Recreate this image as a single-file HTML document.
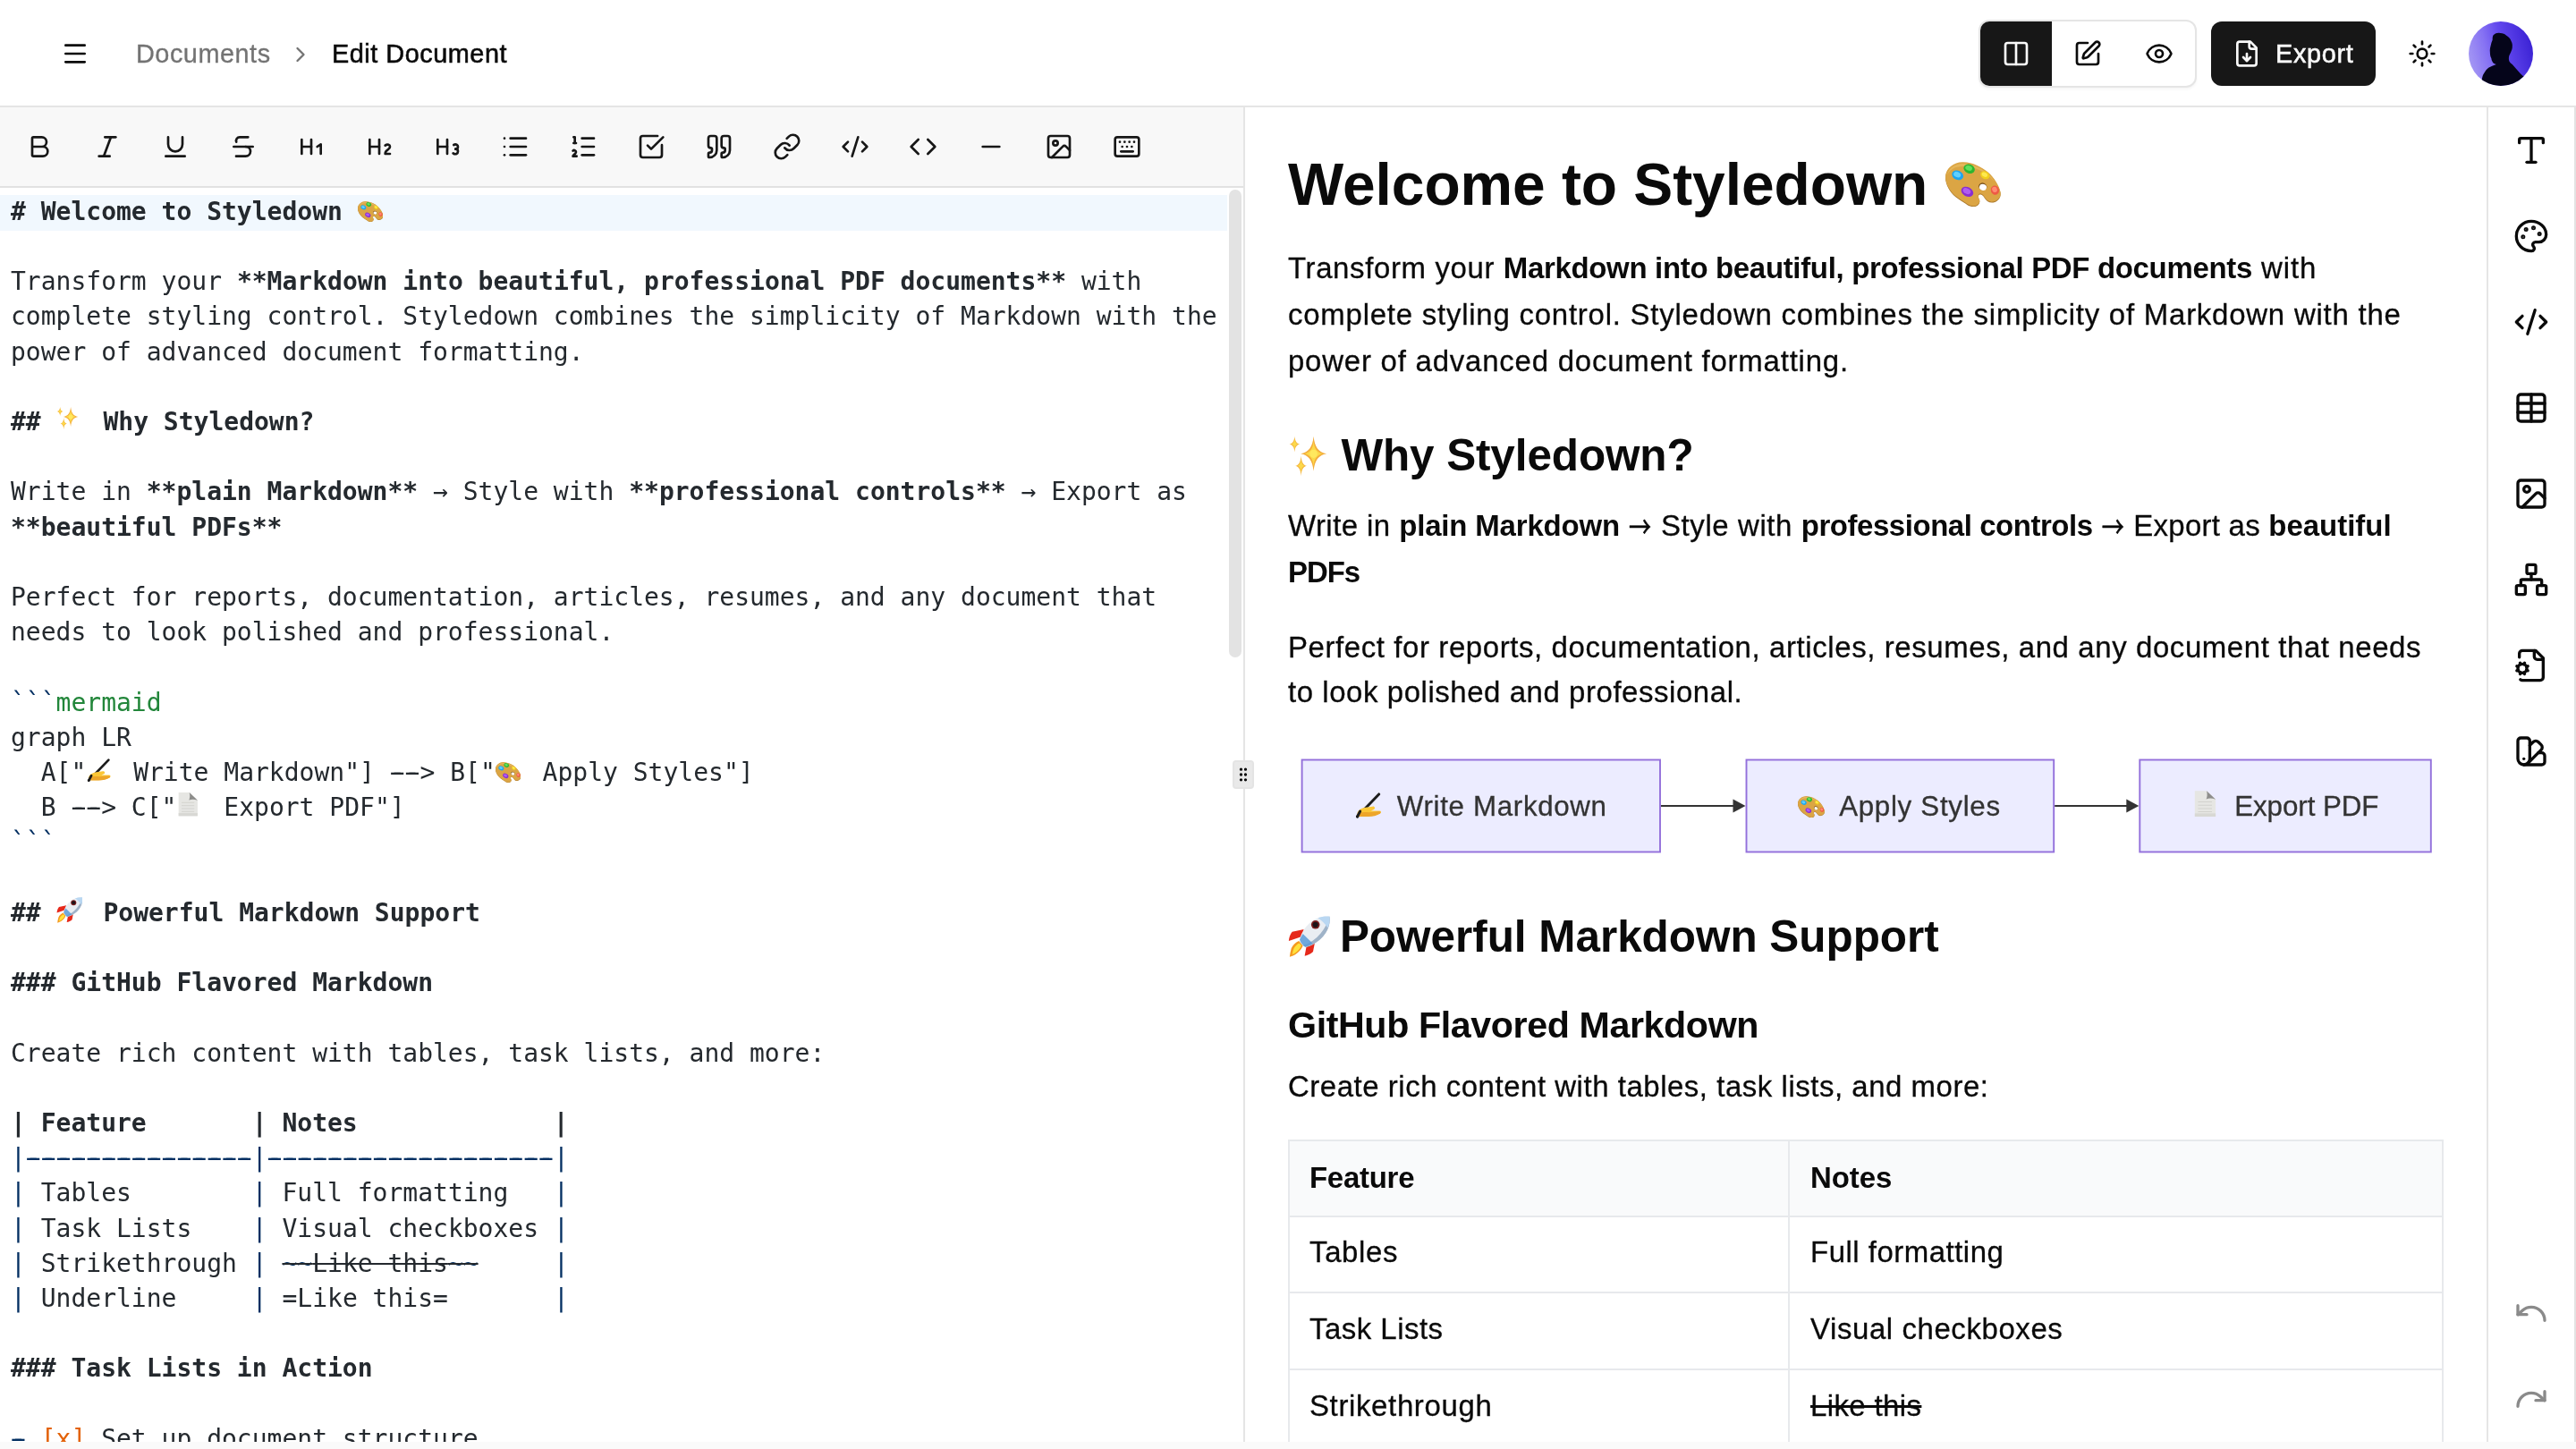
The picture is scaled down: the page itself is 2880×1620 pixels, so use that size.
<!DOCTYPE html><html lang="en"><head><meta charset="utf-8"><title>Styledown – Edit Document</title><style>
*{box-sizing:border-box;margin:0;padding:0}
html,body{width:2880px;height:1620px;overflow:hidden}
@media (max-width:2000px){html{zoom:.5}}
body{background:#fafafa;font-family:"Liberation Sans", sans-serif;color:#0a0a0a;position:relative}
#card{position:absolute;left:0;top:0;width:2880px;height:1612px;background:#fff;overflow:hidden}
#rb{position:absolute;left:2878px;top:120px;width:2px;height:1492px;background:#e3e3e3}
.ic{position:absolute;display:block}
.tl{position:absolute;white-space:pre;will-change:transform}
.em{display:inline-block;position:relative;height:1px;vertical-align:baseline}
.em svg{position:absolute;bottom:auto}
#hdr{position:absolute;left:0;top:0;width:2880px;height:120px;border-bottom:2px solid #e5e5e5;background:#fff}
#grp{position:absolute;left:2212px;top:22px;width:244px;height:76px;border:2px solid #e5e5e5;border-radius:12px;box-shadow:0 2px 3px rgba(0,0,0,.04);overflow:hidden;background:#fff}
#grp .on{position:absolute;left:0;top:0;width:80px;height:72px;background:#171717}
#exp{position:absolute;left:2472px;top:24px;width:184px;height:72px;border-radius:12px;background:#171717}
#ava{position:absolute;left:2760px;top:24px}
#tb{position:absolute;left:0;top:120px;width:1390px;height:90px;background:#f8f8f8;border-bottom:2px solid #e2e2e2}
#tb .ic{margin-top:-120px}
#ed{position:absolute;left:0;top:210px;width:1390px;height:1402px;overflow:hidden;font-family:"DejaVu Sans Mono", "Liberation Mono", monospace;font-size:28px;line-height:39.2px;color:#24292e;background:#fff}
#ed .el{position:absolute;left:12px;white-space:pre;height:39.2px;margin-top:-210px;will-change:transform}
#ed b{font-weight:700}
#ed .em{height:1px}
#act{position:absolute;left:0;width:1372px;height:39.6px;background:#f1f8fe;margin-top:-210px}
.st{text-decoration:line-through;text-decoration-thickness:2px}
.dw{text-shadow:3.5px 0 0 currentColor,-3.5px 0 0 currentColor}
.md{-webkit-text-stroke:.55px currentColor}
#sbt{position:absolute;left:1374px;top:2px;width:14px;height:523px;border-radius:7px;background:#e3e3e3}
#div{position:absolute;left:1390px;top:120px;width:2px;height:1492px;background:#e5e5e5}
#hdl{position:absolute;left:1378px;top:850px;width:24px;height:32px;border-radius:4px;background:#e9e9e9;border:2px solid #e4e4e4}
#pv{position:absolute;left:0;top:0;width:2780px;height:1612px;overflow:hidden;pointer-events:none}
.arr{display:inline-block;width:27.3px;text-align:center;font-family:"Noto Sans CJK SC","Liberation Sans", sans-serif;font-size:25px;line-height:1;letter-spacing:0;-webkit-text-stroke:.45px currentColor;transform:scaleY(1.3);position:relative;top:-1.2px}
#mm{position:absolute}
#tbl{position:absolute;left:1440px;top:1274px;width:1292px;height:400px;border:2px solid #e7e9ec;border-bottom:none}
#tbl .th{position:absolute;left:0;top:0;width:100%;height:84px;background:#f9fafb}
#tbl .hl{position:absolute;left:0;width:100%;height:2px;background:#e7e9ec;margin-top:-2px}
#tbl .vl{position:absolute;left:557px;top:0;width:2px;height:100%;background:#e7e9ec}
#sd{position:absolute;left:2780px;top:120px;width:98px;height:1492px;border-left:2px solid #e5e5e5;background:#fff}
</style></head><body><div id="card"><div id="hdr">
<svg class="ic" style="left:68px;top:44px;color:#0a0a0a" width="32" height="32" viewBox="0 0 24 24" fill="none" stroke="currentColor" stroke-width="2" stroke-linecap="round" stroke-linejoin="round"><path d="M4 5h16"/><path d="M4 12h16"/><path d="M4 19h16"/></svg>
<div class="tl " style="left:152px;top:39.01px;line-height:42px;font-size:28.84px;"><span style="font-size:28.84px;letter-spacing:0.533px;-webkit-text-stroke:.3px currentColor;color:#737373">Documents</span></div>
<svg class="ic" style="left:322px;top:46.5px;color:#737373" width="28" height="28" viewBox="0 0 24 24" fill="none" stroke="currentColor" stroke-width="2" stroke-linecap="round" stroke-linejoin="round"><path d="m9 18 6-6-6-6"/></svg>
<div class="tl " style="left:370.5px;top:39.01px;line-height:42px;font-size:28.84px;"><span style="font-size:28.84px;letter-spacing:0.537px;-webkit-text-stroke:.55px currentColor;color:#0a0a0a">Edit Document</span></div>
<div id="grp"><div class="on"></div></div>
<svg class="ic" style="left:2238px;top:44px;color:#fafafa" width="32" height="32" viewBox="0 0 24 24" fill="none" stroke="currentColor" stroke-width="2" stroke-linecap="round" stroke-linejoin="round"><rect width="18" height="18" x="3" y="3" rx="2"/><path d="M12 3v18"/></svg>
<svg class="ic" style="left:2318px;top:44px;color:#0a0a0a" width="32" height="32" viewBox="0 0 24 24" fill="none" stroke="currentColor" stroke-width="2" stroke-linecap="round" stroke-linejoin="round"><path d="M12 3H5a2 2 0 0 0-2 2v14a2 2 0 0 0 2 2h14a2 2 0 0 0 2-2v-7"/><path d="M18.375 2.625a1 1 0 0 1 3 3l-9.013 9.014a2 2 0 0 1-.853.505l-2.873.84a.5.5 0 0 1-.62-.62l.84-2.873a2 2 0 0 1 .506-.852z"/></svg>
<svg class="ic" style="left:2398px;top:44px;color:#0a0a0a" width="32" height="32" viewBox="0 0 24 24" fill="none" stroke="currentColor" stroke-width="2" stroke-linecap="round" stroke-linejoin="round"><path d="M2.062 12.348a1 1 0 0 1 0-.696 10.75 10.75 0 0 1 19.876 0 1 1 0 0 1 0 .696 10.75 10.75 0 0 1-19.876 0"/><circle cx="12" cy="12" r="3"/></svg>
<div id="exp"></div>
<svg class="ic" style="left:2496px;top:44px;color:#fafafa" width="32" height="32" viewBox="0 0 24 24" fill="none" stroke="currentColor" stroke-width="2" stroke-linecap="round" stroke-linejoin="round"><path d="M15 2H6a2 2 0 0 0-2 2v16a2 2 0 0 0 2 2h12a2 2 0 0 0 2-2V7Z"/><path d="M14 2v4a2 2 0 0 0 2 2h4"/><path d="M12 18v-6"/><path d="m9 15 3 3 3-3"/></svg>
<div class="tl " style="left:2544px;top:39.01px;line-height:42px;font-size:28.84px;"><span style="font-size:28.84px;letter-spacing:0.703px;-webkit-text-stroke:.55px currentColor;color:#fafafa">Export</span></div>
<svg class="ic" style="left:2692px;top:44px;color:#0a0a0a" width="32" height="32" viewBox="0 0 24 24" fill="none" stroke="currentColor" stroke-width="2" stroke-linecap="round" stroke-linejoin="round"><circle cx="12" cy="12" r="4"/><path d="M12 2v2"/><path d="M12 20v2"/><path d="m4.93 4.93 1.41 1.41"/><path d="m17.66 17.66 1.41 1.41"/><path d="M2 12h2"/><path d="M20 12h2"/><path d="m6.34 17.66-1.41 1.41"/><path d="m19.07 4.93-1.41 1.41"/></svg>
<svg id="ava" width="72" height="72" viewBox="0 0 72 72"><defs><linearGradient id="ag" x1="0" y1="0.62" x2="1" y2="0.38"><stop offset="0" stop-color="#a598f4"/><stop offset=".3" stop-color="#8672f3"/><stop offset=".55" stop-color="#6248ee"/><stop offset="1" stop-color="#3b22d4"/></linearGradient><clipPath id="ac"><circle cx="36" cy="36" r="36"/></clipPath></defs>
<g clip-path="url(#ac)"><rect width="72" height="72" fill="url(#ag)"/>
<path d="M27.400 15.500C30 13 33 12.500 35 13.100c3-.1 5.500.9 6.900 2.400 3.100 2 4.900 4 5.500 6.200 1.200 2.300 1.600 3.800 1.400 5.600.1 2.200-.3 3.700-1 5.500-.8 2.200-1.800 4-2.500 5.500-.5 1.700-.5 3.200-.3 4.800.5 2.400 2 3.900 3.800 4.900l9 10.300L66 66l-6 14H10l5-16.200c.5-2.800 1-4.300 2-5.500 1.500-3.300 3.500-5.300 5.600-6.900 2.900-1.400 5.900-2.400 8.200-3.400-1.800-.5-3.300-1.500-4.100-2.800-.9-1.400-1.400-2.700-1.400-4.100-1.100-2.100-1.500-4.600-1.400-6.900-.4-2.200.1-4.700.7-6.900.4-2.300 1.200-4.800 2.100-6.900-.2-1.900.1-3.600.7-4.900z" fill="#05051a"/></g></svg>
</div>
<div id="tb">
<svg class="ic" style="left:28px;top:148px;color:#171717" width="32" height="32" viewBox="0 0 24 24" fill="none" stroke="currentColor" stroke-width="2" stroke-linecap="round" stroke-linejoin="round"><path d="M6 12h9a4 4 0 0 1 0 8H7a1 1 0 0 1-1-1V5a1 1 0 0 1 1-1h7a4 4 0 0 1 0 8"/></svg>
<svg class="ic" style="left:104px;top:148px;color:#171717" width="32" height="32" viewBox="0 0 24 24" fill="none" stroke="currentColor" stroke-width="2" stroke-linecap="round" stroke-linejoin="round"><path d="M19 4h-9"/><path d="M14 20H5"/><path d="M15 4 9 20"/></svg>
<svg class="ic" style="left:180px;top:148px;color:#171717" width="32" height="32" viewBox="0 0 24 24" fill="none" stroke="currentColor" stroke-width="2" stroke-linecap="round" stroke-linejoin="round"><path d="M6 4v6a6 6 0 0 0 12 0V4"/><path d="M4 20h16"/></svg>
<svg class="ic" style="left:256px;top:148px;color:#171717" width="32" height="32" viewBox="0 0 24 24" fill="none" stroke="currentColor" stroke-width="2" stroke-linecap="round" stroke-linejoin="round"><path d="M16 4H9a3 3 0 0 0-2.83 4"/><path d="M14 12a4 4 0 0 1 0 8H6"/><path d="M4 12h16"/></svg>
<svg class="ic" style="left:332px;top:148px;color:#171717" width="32" height="32" viewBox="0 0 24 24" fill="none" stroke="currentColor" stroke-width="2" stroke-linecap="round" stroke-linejoin="round"><path d="M4 12h8"/><path d="M4 18V6"/><path d="M12 18V6"/><path d="m17 12 3-2v8"/></svg>
<svg class="ic" style="left:408px;top:148px;color:#171717" width="32" height="32" viewBox="0 0 24 24" fill="none" stroke="currentColor" stroke-width="2" stroke-linecap="round" stroke-linejoin="round"><path d="M4 12h8"/><path d="M4 18V6"/><path d="M12 18V6"/><path d="M21 18h-4c0-4 4-3 4-6 0-1.5-2-2.5-4-1"/></svg>
<svg class="ic" style="left:484px;top:148px;color:#171717" width="32" height="32" viewBox="0 0 24 24" fill="none" stroke="currentColor" stroke-width="2" stroke-linecap="round" stroke-linejoin="round"><path d="M4 12h8"/><path d="M4 18V6"/><path d="M12 18V6"/><path d="M17.5 10.5c1.7-1 3.5 0 3.5 1.5a2 2 0 0 1-2 2"/><path d="M17 17.5c2 1.5 4 .3 4-1.5a2 2 0 0 0-2-2"/></svg>
<svg class="ic" style="left:560px;top:148px;color:#171717" width="32" height="32" viewBox="0 0 24 24" fill="none" stroke="currentColor" stroke-width="2" stroke-linecap="round" stroke-linejoin="round"><path d="M3 5h.01"/><path d="M3 12h.01"/><path d="M3 19h.01"/><path d="M8 5h13"/><path d="M8 12h13"/><path d="M8 19h13"/></svg>
<svg class="ic" style="left:636px;top:148px;color:#171717" width="32" height="32" viewBox="0 0 24 24" fill="none" stroke="currentColor" stroke-width="2" stroke-linecap="round" stroke-linejoin="round"><path d="M11 5h10"/><path d="M11 12h10"/><path d="M11 19h10"/><path d="M4 4h1v5"/><path d="M4 9h2"/><path d="M6.5 20H3.4c0-1 2.6-1.925 2.6-3.5a1.5 1.5 0 0 0-2.6-1.02"/></svg>
<svg class="ic" style="left:712px;top:148px;color:#171717" width="32" height="32" viewBox="0 0 24 24" fill="none" stroke="currentColor" stroke-width="2" stroke-linecap="round" stroke-linejoin="round"><path d="M21 10.656V19a2 2 0 0 1-2 2H5a2 2 0 0 1-2-2V5a2 2 0 0 1 2-2h12.344"/><path d="m9 11 3 3L22 4"/></svg>
<svg class="ic" style="left:788px;top:148px;color:#171717" width="32" height="32" viewBox="0 0 24 24" fill="none" stroke="currentColor" stroke-width="2" stroke-linecap="round" stroke-linejoin="round"><path d="M16 3a2 2 0 0 0-2 2v6a2 2 0 0 0 2 2 1 1 0 0 1 1 1v1a2 2 0 0 1-2 2 1 1 0 0 0-1 1v2a1 1 0 0 0 1 1 6 6 0 0 0 6-6V5a2 2 0 0 0-2-2z"/><path d="M5 3a2 2 0 0 0-2 2v6a2 2 0 0 0 2 2 1 1 0 0 1 1 1v1a2 2 0 0 1-2 2 1 1 0 0 0-1 1v2a1 1 0 0 0 1 1 6 6 0 0 0 6-6V5a2 2 0 0 0-2-2z"/></svg>
<svg class="ic" style="left:864px;top:148px;color:#171717" width="32" height="32" viewBox="0 0 24 24" fill="none" stroke="currentColor" stroke-width="2" stroke-linecap="round" stroke-linejoin="round"><path d="M10 13a5 5 0 0 0 7.54.54l3-3a5 5 0 0 0-7.07-7.07l-1.72 1.71"/><path d="M14 11a5 5 0 0 0-7.54-.54l-3 3a5 5 0 0 0 7.07 7.07l1.71-1.71"/></svg>
<svg class="ic" style="left:940px;top:148px;color:#171717" width="32" height="32" viewBox="0 0 24 24" fill="none" stroke="currentColor" stroke-width="2" stroke-linecap="round" stroke-linejoin="round"><path d="m18 16 4-4-4-4"/><path d="m6 8-4 4 4 4"/><path d="m14.5 4-5 16"/></svg>
<svg class="ic" style="left:1016px;top:148px;color:#171717" width="32" height="32" viewBox="0 0 24 24" fill="none" stroke="currentColor" stroke-width="2" stroke-linecap="round" stroke-linejoin="round"><path d="m16 18 6-6-6-6"/><path d="m8 6-6 6 6 6"/></svg>
<svg class="ic" style="left:1092px;top:148px;color:#171717" width="32" height="32" viewBox="0 0 24 24" fill="none" stroke="currentColor" stroke-width="2" stroke-linecap="round" stroke-linejoin="round"><path d="M5 12h14"/></svg>
<svg class="ic" style="left:1168px;top:148px;color:#171717" width="32" height="32" viewBox="0 0 24 24" fill="none" stroke="currentColor" stroke-width="2" stroke-linecap="round" stroke-linejoin="round"><rect width="18" height="18" x="3" y="3" rx="2" ry="2"/><circle cx="9" cy="9" r="2"/><path d="m21 15-3.086-3.086a2 2 0 0 0-2.828 0L6 21"/></svg>
<svg class="ic" style="left:1244px;top:148px;color:#171717" width="32" height="32" viewBox="0 0 24 24" fill="none" stroke="currentColor" stroke-width="2" stroke-linecap="round" stroke-linejoin="round"><path d="M10 8h.01"/><path d="M12 12h.01"/><path d="M14 8h.01"/><path d="M16 12h.01"/><path d="M18 8h.01"/><path d="M6 8h.01"/><path d="M7 16h10"/><path d="M8 12h.01"/><rect width="20" height="16" x="2" y="4" rx="2"/></svg>
</div>
<div id="ed">
<div id="act" style="top:218px"></div>
<div class="el " style="top:216.70px"><b># Welcome to Styledown </b><span class="em" style="width:36px"><svg style="left:0px;top:-20.48px" width="28.5" height="22.98" viewBox="0 0 62 50"><path d="M0 16.1C.6 11 2.8 7.400 5.900 5 10 1.600 15 0 20.200.3c5.400.2 10.300 1.300 14.900 3.400 4.700 2.100 8.800 4.600 12.400 7.500 3.800 3.300 6.900 7 9.300 11.200 2.300 3.600 4 7.300 4.900 11.100.5 3 0 5.500-1.800 7.500-1.600 2-3.700 3.200-6.200 3.700-2.200.4-4.300 0-6.200-1.200-1.700-1.200-3.100-2.900-4.300-5-.9-1.500-2.200-2.500-3.800-2.800-1.300-.2-2.100.4-2.400 1.600-.2 1.500.2 3.100 1.200 4.900.6 1.900.2 3.500-1.200 5-1.200 1.300-2.700 2-4.400 2.200-3.400.3-6.700-.8-9.900-3.400-4.200-2.400-7.900-4.900-11.200-7.500C7.800 35.300 5.100 32 3.400 28.600 1.200 24.600 0 20.400 0 16.100z" fill="#a8762a" transform="translate(0 .9)"/><path d="M0 16.1C.6 11 2.8 7.400 5.900 5 10 1.600 15 0 20.200.3c5.400.2 10.300 1.300 14.900 3.400 4.700 2.100 8.800 4.600 12.400 7.500 3.800 3.300 6.900 7 9.300 11.200 2.300 3.600 4 7.300 4.900 11.100.5 3 0 5.500-1.800 7.500-1.600 2-3.700 3.200-6.200 3.700-2.200.4-4.300 0-6.200-1.200-1.700-1.200-3.100-2.900-4.300-5-.9-1.500-2.200-2.500-3.800-2.800-1.300-.2-2.100.4-2.400 1.600-.2 1.500.2 3.100 1.200 4.900.6 1.900.2 3.500-1.200 5-1.200 1.300-2.700 2-4.400 2.200-3.400.3-6.700-.8-9.900-3.400-4.200-2.400-7.900-4.900-11.200-7.500C7.800 35.300 5.100 32 3.400 28.600 1.200 24.600 0 20.400 0 16.100z" fill="#dba544"/><path d="M2 15C3 9 8 3.500 16 2.200c8-1.200 17 1.300 25 6 6 3.500 11 8.500 14.500 14.500C50 16 43 10.500 34 7.500 25 4.500 14 4 8 8c-3 2-5 4.500-6 7z" fill="#e9bd62" opacity=".7"/><ellipse cx="13.7" cy="14.9" rx="6.6" ry="5.2" fill="#1ea5ee" transform="rotate(25 13.7 14.9)"/><ellipse cx="13.2" cy="14.2" rx="4.2" ry="3" fill="#5fd0ff" transform="rotate(25 13.2 14.2)"/><ellipse cx="26.7" cy="7.8" rx="6.4" ry="5" fill="#2fb52f" transform="rotate(20 26.7 7.8)"/><ellipse cx="26.2" cy="7" rx="4" ry="2.8" fill="#62e05c" transform="rotate(20 26.2 7)"/><ellipse cx="44.4" cy="14.9" rx="5.4" ry="4.2" fill="#f2cf1c" transform="rotate(30 44.4 14.9)"/><ellipse cx="44" cy="14.3" rx="3.4" ry="2.4" fill="#ffe94f" transform="rotate(30 44 14.3)"/><ellipse cx="55.6" cy="31.7" rx="4.6" ry="5.2" fill="#ee5a45" transform="rotate(-20 55.6 31.7)"/><ellipse cx="55.2" cy="31" rx="2.8" ry="3.2" fill="#ff8b72" transform="rotate(-20 55.2 31)"/><ellipse cx="24.5" cy="33.5" rx="7.2" ry="5.2" fill="#8a2fd0" transform="rotate(28 24.5 33.5)"/><ellipse cx="24" cy="32.8" rx="4.6" ry="3" fill="#b05cf0" transform="rotate(28 24 32.8)"/><ellipse cx="41.9" cy="27.6" rx="4.7" ry="4.1" fill="#7a521a" transform="rotate(20 41.9 27.6)"/><ellipse cx="42.1" cy="28.5" rx="4.1" ry="3.5" fill="#ffffff" transform="rotate(20 42.1 28.5)"/></svg></span></div>
<div class="el " style="top:295.10px">Transform your <b>**Markdown into beautiful, professional PDF documents**</b> with</div>
<div class="el " style="top:334.30px">complete styling control. Styledown combines the simplicity of Markdown with the</div>
<div class="el " style="top:373.50px">power of advanced document formatting.</div>
<div class="el " style="top:451.90px"><b>## </b><span class="em" style="width:36px"><svg style="left:0px;top:-25.62px" width="27" height="28.12" viewBox="0 0 48 50"><path d="M28.6 1.8000000000000007C29.76 13.81 34.17 19.74 43.1 21.3C34.17 22.86 29.76 28.79 28.6 40.8C27.44 28.79 23.03 22.86 14.100000000000001 21.3C23.03 19.74 27.44 13.81 28.6 1.8000000000000007z" fill="#f3ad3d"/><path d="M28.6 7.300000000000001C29.44 15.92 32.63 20.18 39.1 21.3C32.63 22.42 29.44 26.68 28.6 35.3C27.76 26.68 24.57 22.42 18.1 21.3C24.57 20.18 27.76 15.92 28.6 7.300000000000001z" fill="#fcd94a"/><ellipse cx="28.6" cy="21.3" rx="4.2" ry="4.6" fill="#ffe85e"/><path d="M7.4 1.6999999999999993C7.88 7.18 9.70 9.89 13.4 10.6C9.70 11.31 7.88 14.02 7.4 19.5C6.92 14.02 5.10 11.31 1.4000000000000004 10.6C5.10 9.89 6.92 7.18 7.4 1.6999999999999993z" fill="#f4b640"/><path d="M7.4 4.6C7.72 8.30 8.94 10.12 11.4 10.6C8.94 11.08 7.72 12.90 7.4 16.6C7.08 12.90 5.86 11.08 3.4000000000000004 10.6C5.86 10.12 7.08 8.30 7.4 4.6z" fill="#fcd94a"/><path d="M14.6 23.4C15.10 30.42 17.02 33.89 20.9 34.8C17.02 35.71 15.10 39.18 14.6 46.199999999999996C14.10 39.18 12.18 35.71 8.3 34.8C12.18 33.89 14.10 30.42 14.6 23.4z" fill="#f4b640"/><path d="M14.6 27.199999999999996C14.94 31.88 16.21 34.19 18.8 34.8C16.21 35.41 14.94 37.72 14.6 42.4C14.26 37.72 12.99 35.41 10.399999999999999 34.8C12.99 34.19 14.26 31.88 14.6 27.199999999999996z" fill="#fcd94a"/></svg></span><b> Why Styledown?</b></div>
<div class="el " style="top:530.30px">Write in <b>**plain Markdown**</b> → Style with <b>**professional controls**</b> → Export as</div>
<div class="el " style="top:569.50px"><b>**beautiful PDFs**</b></div>
<div class="el " style="top:647.90px">Perfect for reports, documentation, articles, resumes, and any document that</div>
<div class="el " style="top:687.10px">needs to look polished and professional.</div>
<div class="el " style="top:765.50px"><span style="color:#032f62">```</span><span style="color:#22863a">mermaid</span></div>
<div class="el " style="top:804.70px">graph LR</div>
<div class="el " style="top:843.90px">  A["<span class="em" style="width:36px"><svg style="left:0px;top:-26.50px" width="29" height="29.00" viewBox="0 0 36 36"><path d="M4 33 31.500 4.500" stroke="#1c1c1c" stroke-width="3.400" stroke-linecap="round"/><path d="M4.500 27c2-3.200 6-5.200 10-5.700l9-1.200c2.600-.3 3.800 2.600 1.600 3.800L21.500 25.500h10.700c2.100 0 2.700 2.300 1 3.300-4 2.300-9.200 3.700-15.200 3.700H7.500c-2.600 0-4.500-2.700-3-5.500z" fill="#fbc636"/><path d="M4.500 29c4-1.500 9-2 14-1.500l13.800-1.200c1.500.5 1.800 2.200.6 2.900-4 2.300-9.100 3.800-15.100 3.800H7.500c-2 0-3.500-2-3-4z" fill="#eda52a"/><path d="M4 33l3.600-6.800" stroke="#1c1c1c" stroke-width="3.400" stroke-linecap="round"/></svg></span> Write Markdown"] <span class="dw">--</span>&gt; B["<span class="em" style="width:36px"><svg style="left:0px;top:-20.48px" width="28.5" height="22.98" viewBox="0 0 62 50"><path d="M0 16.1C.6 11 2.8 7.400 5.900 5 10 1.600 15 0 20.200.3c5.400.2 10.300 1.300 14.900 3.400 4.700 2.100 8.800 4.600 12.400 7.500 3.800 3.300 6.900 7 9.300 11.200 2.300 3.600 4 7.300 4.900 11.100.5 3 0 5.500-1.800 7.500-1.600 2-3.700 3.200-6.200 3.700-2.200.4-4.300 0-6.200-1.200-1.700-1.200-3.100-2.900-4.300-5-.9-1.500-2.200-2.500-3.800-2.800-1.300-.2-2.100.4-2.400 1.600-.2 1.500.2 3.100 1.200 4.900.6 1.900.2 3.500-1.200 5-1.200 1.300-2.700 2-4.400 2.200-3.400.3-6.700-.8-9.900-3.400-4.200-2.400-7.900-4.900-11.200-7.500C7.800 35.300 5.100 32 3.400 28.600 1.200 24.600 0 20.400 0 16.100z" fill="#a8762a" transform="translate(0 .9)"/><path d="M0 16.1C.6 11 2.8 7.400 5.900 5 10 1.600 15 0 20.200.3c5.400.2 10.300 1.300 14.900 3.400 4.700 2.100 8.800 4.600 12.400 7.500 3.800 3.300 6.900 7 9.300 11.200 2.300 3.600 4 7.300 4.900 11.100.5 3 0 5.500-1.800 7.500-1.600 2-3.700 3.200-6.200 3.700-2.200.4-4.300 0-6.200-1.200-1.700-1.200-3.100-2.900-4.300-5-.9-1.500-2.200-2.500-3.800-2.800-1.300-.2-2.100.4-2.400 1.600-.2 1.500.2 3.100 1.200 4.900.6 1.900.2 3.500-1.200 5-1.200 1.300-2.700 2-4.400 2.200-3.400.3-6.700-.8-9.900-3.400-4.200-2.400-7.900-4.900-11.200-7.500C7.800 35.300 5.100 32 3.400 28.600 1.200 24.600 0 20.400 0 16.100z" fill="#dba544"/><path d="M2 15C3 9 8 3.500 16 2.200c8-1.200 17 1.300 25 6 6 3.500 11 8.500 14.500 14.500C50 16 43 10.500 34 7.500 25 4.500 14 4 8 8c-3 2-5 4.500-6 7z" fill="#e9bd62" opacity=".7"/><ellipse cx="13.7" cy="14.9" rx="6.6" ry="5.2" fill="#1ea5ee" transform="rotate(25 13.7 14.9)"/><ellipse cx="13.2" cy="14.2" rx="4.2" ry="3" fill="#5fd0ff" transform="rotate(25 13.2 14.2)"/><ellipse cx="26.7" cy="7.8" rx="6.4" ry="5" fill="#2fb52f" transform="rotate(20 26.7 7.8)"/><ellipse cx="26.2" cy="7" rx="4" ry="2.8" fill="#62e05c" transform="rotate(20 26.2 7)"/><ellipse cx="44.4" cy="14.9" rx="5.4" ry="4.2" fill="#f2cf1c" transform="rotate(30 44.4 14.9)"/><ellipse cx="44" cy="14.3" rx="3.4" ry="2.4" fill="#ffe94f" transform="rotate(30 44 14.3)"/><ellipse cx="55.6" cy="31.7" rx="4.6" ry="5.2" fill="#ee5a45" transform="rotate(-20 55.6 31.7)"/><ellipse cx="55.2" cy="31" rx="2.8" ry="3.2" fill="#ff8b72" transform="rotate(-20 55.2 31)"/><ellipse cx="24.5" cy="33.5" rx="7.2" ry="5.2" fill="#8a2fd0" transform="rotate(28 24.5 33.5)"/><ellipse cx="24" cy="32.8" rx="4.6" ry="3" fill="#b05cf0" transform="rotate(28 24 32.8)"/><ellipse cx="41.9" cy="27.6" rx="4.7" ry="4.1" fill="#7a521a" transform="rotate(20 41.9 27.6)"/><ellipse cx="42.1" cy="28.5" rx="4.1" ry="3.5" fill="#ffffff" transform="rotate(20 42.1 28.5)"/></svg></span> Apply Styles"]</div>
<div class="el " style="top:883.10px">  B <span class="dw">--</span>&gt; C["<span class="em" style="width:36px"><svg style="left:1px;top:-27.50px" width="25" height="30.00" viewBox="0 0 30 36"><path d="M2 2.500h14.500L27.500 13v21H2z" fill="#e6e6e3"/><path d="M2 30h25.500v4H2z" fill="#d8d8d4"/><path d="M16.500 2.500c1 4 .8 7.300-.5 10 3.500-1.300 7.300-1.200 11.500.5z" fill="#8d8d8b"/><path d="M6 16h17M6 20h17M6 24h17M6 28h17" stroke="#d2d2ce" stroke-width="1.100"/></svg></span> Export PDF"]</div>
<div class="el " style="top:922.30px"><span style="color:#032f62">```</span></div>
<div class="el " style="top:1000.70px"><b>## </b><span class="em" style="width:36px"><svg style="left:0px;top:-26.37px" width="29.5" height="28.87" viewBox="0 0 47 46"><path d="M12.100 28l4.700 4.600C15.500 37 12 41 8.400 42.900 6 44.300 3.800 45.200 1.900 45.700c.3-3.200.9-6.300 1.800-9.400 1.600-3.600 4.400-6.400 8.400-8.300z" fill="#f59a1f"/><path d="M12.500 30.500l2.500 2.500c-1.300 3.200-3.500 6-6.300 8-1.400.9-2.700 1.500-3.900 1.900.3-2.300.9-4.500 1.800-6.600 1.400-2.600 3.400-4.500 5.900-5.800z" fill="#ffe23d"/><path d="M4.700 17.700 17.700 14.900 14.900 23.300.9 28c.2-4 1.500-7.400 3.800-10.300z" fill="#e6291b"/><path d="M22.400 26.100l7.400 4.600-1.800 9.400c-2.600 2.400-5.700 3.900-9.400 4.600l1.900-10.200z" fill="#e6291b"/><path d="M46.500.6c.9 6.500-.6 12.700-4.300 18.500-3.600 5.500-8.600 9.900-14.900 13.100-2.600 1.300-5.200 2.200-7.800 2.700-2.700-1.200-5-3.500-6.800-6.900.4-2.800 1.200-5.500 2.500-8.100C18.300 13.600 22.600 8.600 28 5 33.700 1.400 39.900-.1 46.500.6z" fill="#e9edf2"/><path d="M46.500.6c.9 6.500-.6 12.700-4.300 18.500-3.600 5.500-8.600 9.900-14.900 13.100-2.600 1.300-5.200 2.200-7.800 2.700-1-.4-1.900-1-2.800-1.800C24.500 30.500 31.300 26 36.500 19.600 41.400 13.700 44.700 7.400 46.500.6z" fill="#9fb3c8"/><path d="M13 26.500c1-2.300 2.200-4.500 3.600-6.500l11 10.800c-2.700 1.600-5.400 2.900-8.100 3.700-2.900-1.500-5-4.100-6.500-8z" fill="#5b9bd8" opacity=".85"/><path d="M46.500.6c-4.600-.5-9 .1-13.100 1.700 2.100 1.300 4.100 2.900 5.900 4.800 2 2 3.700 4.100 5 6.300C46.400 9.400 47.100 5.100 46.500.6z" fill="#b9d7f2"/><circle cx="30.700" cy="9.800" r="4.800" fill="#7a1f1f"/><circle cx="30.700" cy="9.800" r="3.100" fill="#1d1418"/></svg></span><b> Powerful Markdown Support</b></div>
<div class="el " style="top:1079.10px"><b>### GitHub Flavored Markdown</b></div>
<div class="el " style="top:1157.50px">Create rich content with tables, task lists, and more:</div>
<div class="el " style="top:1235.90px"><b>| Feature       | Notes             |</b></div>
<div class="el " style="top:1275.10px"><span style="color:#032f62">|<span class="dw">---------------</span>|<span class="dw">-------------------</span>|</span></div>
<div class="el " style="top:1314.30px"><span style="color:#032f62">| </span>Tables        <span style="color:#032f62">| </span>Full formatting   <span style="color:#032f62">|</span></div>
<div class="el " style="top:1353.50px"><span style="color:#032f62">| </span>Task Lists    <span style="color:#032f62">| </span>Visual checkboxes <span style="color:#032f62">|</span></div>
<div class="el " style="top:1392.70px"><span style="color:#032f62">| </span>Strikethrough <span style="color:#032f62">| </span><span class="st"><span style="color:#032f62">~~</span>Like this<span style="color:#032f62">~~</span></span>     <span style="color:#032f62">|</span></div>
<div class="el " style="top:1431.90px"><span style="color:#032f62">| </span>Underline     <span style="color:#032f62">| </span>=Like this=       <span style="color:#032f62">|</span></div>
<div class="el " style="top:1510.30px"><b>### Task Lists in Action</b></div>
<div class="el " style="top:1588.70px"><span class="dw" style="color:#032f62">-</span> <span style="color:#e36209">[x]</span> Set up document structure</div>
<div id="sbt"></div>
</div>
<div id="div"></div><div id="hdl"></div>
<svg class="ic" style="left:1380px;top:856px;color:#0a0a0a" width="20" height="20" viewBox="0 0 24 24" fill="none" stroke="currentColor" stroke-width="2" stroke-linecap="round" stroke-linejoin="round"><circle cx="9" cy="12" r="1"/><circle cx="9" cy="5" r="1"/><circle cx="9" cy="19" r="1"/><circle cx="15" cy="12" r="1"/><circle cx="15" cy="5" r="1"/><circle cx="15" cy="19" r="1"/></svg>
<div id="pv">
<div class="tl " style="left:1440px;top:165.56px;line-height:80px;font-size:65.92px;"><span style="font-size:65.92px;letter-spacing:-0.063px;font-weight:700">Welcome to Styledown </span><span class="em" style="width:64px"><svg style="left:1.5px;top:-46.74px" width="61.8" height="49.84" viewBox="0 0 62 50"><path d="M0 16.1C.6 11 2.8 7.400 5.900 5 10 1.600 15 0 20.200.3c5.400.2 10.300 1.300 14.900 3.400 4.700 2.100 8.800 4.600 12.400 7.500 3.800 3.300 6.900 7 9.300 11.200 2.300 3.600 4 7.300 4.900 11.100.5 3 0 5.500-1.800 7.500-1.600 2-3.700 3.200-6.200 3.700-2.200.4-4.300 0-6.200-1.200-1.700-1.200-3.100-2.900-4.300-5-.9-1.500-2.200-2.500-3.800-2.800-1.300-.2-2.100.4-2.400 1.600-.2 1.500.2 3.100 1.200 4.900.6 1.900.2 3.500-1.200 5-1.200 1.300-2.700 2-4.400 2.200-3.400.3-6.700-.8-9.900-3.400-4.200-2.400-7.900-4.900-11.200-7.500C7.800 35.300 5.100 32 3.400 28.600 1.200 24.600 0 20.400 0 16.100z" fill="#a8762a" transform="translate(0 .9)"/><path d="M0 16.1C.6 11 2.8 7.400 5.900 5 10 1.600 15 0 20.200.3c5.400.2 10.300 1.300 14.900 3.400 4.700 2.100 8.800 4.600 12.400 7.500 3.800 3.300 6.900 7 9.300 11.200 2.300 3.600 4 7.300 4.900 11.100.5 3 0 5.500-1.800 7.500-1.600 2-3.700 3.200-6.200 3.700-2.200.4-4.300 0-6.200-1.200-1.700-1.200-3.100-2.900-4.300-5-.9-1.500-2.200-2.500-3.800-2.800-1.300-.2-2.100.4-2.400 1.600-.2 1.500.2 3.100 1.200 4.900.6 1.900.2 3.500-1.200 5-1.200 1.300-2.700 2-4.400 2.200-3.400.3-6.700-.8-9.900-3.400-4.200-2.400-7.900-4.900-11.200-7.500C7.800 35.300 5.100 32 3.400 28.600 1.200 24.600 0 20.400 0 16.100z" fill="#dba544"/><path d="M2 15C3 9 8 3.500 16 2.200c8-1.200 17 1.300 25 6 6 3.500 11 8.500 14.500 14.500C50 16 43 10.500 34 7.500 25 4.500 14 4 8 8c-3 2-5 4.500-6 7z" fill="#e9bd62" opacity=".7"/><ellipse cx="13.7" cy="14.9" rx="6.6" ry="5.2" fill="#1ea5ee" transform="rotate(25 13.7 14.9)"/><ellipse cx="13.2" cy="14.2" rx="4.2" ry="3" fill="#5fd0ff" transform="rotate(25 13.2 14.2)"/><ellipse cx="26.7" cy="7.8" rx="6.4" ry="5" fill="#2fb52f" transform="rotate(20 26.7 7.8)"/><ellipse cx="26.2" cy="7" rx="4" ry="2.8" fill="#62e05c" transform="rotate(20 26.2 7)"/><ellipse cx="44.4" cy="14.9" rx="5.4" ry="4.2" fill="#f2cf1c" transform="rotate(30 44.4 14.9)"/><ellipse cx="44" cy="14.3" rx="3.4" ry="2.4" fill="#ffe94f" transform="rotate(30 44 14.3)"/><ellipse cx="55.6" cy="31.7" rx="4.6" ry="5.2" fill="#ee5a45" transform="rotate(-20 55.6 31.7)"/><ellipse cx="55.2" cy="31" rx="2.8" ry="3.2" fill="#ff8b72" transform="rotate(-20 55.2 31)"/><ellipse cx="24.5" cy="33.5" rx="7.2" ry="5.2" fill="#8a2fd0" transform="rotate(28 24.5 33.5)"/><ellipse cx="24" cy="32.8" rx="4.6" ry="3" fill="#b05cf0" transform="rotate(28 24 32.8)"/><ellipse cx="41.9" cy="27.6" rx="4.7" ry="4.1" fill="#7a521a" transform="rotate(20 41.9 27.6)"/><ellipse cx="42.1" cy="28.5" rx="4.1" ry="3.5" fill="#ffffff" transform="rotate(20 42.1 28.5)"/></svg></span></div>
<div class="tl " style="left:1440px;top:274.48px;line-height:52px;font-size:32.96px;"><span style="font-size:32.96px;letter-spacing:0.633px;-webkit-text-stroke:.3px currentColor">Transform your </span><span style="font-size:32.96px;letter-spacing:-0.316px;font-weight:700">Markdown into beautiful, professional PDF documents</span><span style="font-size:32.96px;letter-spacing:0.912px;-webkit-text-stroke:.3px currentColor"> with</span></div>
<div class="tl " style="left:1440px;top:326.28px;line-height:52px;font-size:32.96px;"><span style="font-size:32.96px;letter-spacing:0.768px;-webkit-text-stroke:.3px currentColor">complete styling control. Styledown combines the simplicity of Markdown with the</span></div>
<div class="tl " style="left:1440px;top:378.38px;line-height:52px;font-size:32.96px;"><span style="font-size:32.96px;letter-spacing:0.781px;-webkit-text-stroke:.3px currentColor">power of advanced document formatting.</span></div>
<div class="tl " style="left:1440px;top:479.17px;line-height:60px;font-size:49.44px;"><span class="em" style="width:45.8px"><svg style="left:0px;top:-39.30px" width="48" height="50.00" viewBox="0 0 48 50"><path d="M28.6 1.8000000000000007C29.76 13.81 34.17 19.74 43.1 21.3C34.17 22.86 29.76 28.79 28.6 40.8C27.44 28.79 23.03 22.86 14.100000000000001 21.3C23.03 19.74 27.44 13.81 28.6 1.8000000000000007z" fill="#f3ad3d"/><path d="M28.6 7.300000000000001C29.44 15.92 32.63 20.18 39.1 21.3C32.63 22.42 29.44 26.68 28.6 35.3C27.76 26.68 24.57 22.42 18.1 21.3C24.57 20.18 27.76 15.92 28.6 7.300000000000001z" fill="#fcd94a"/><ellipse cx="28.6" cy="21.3" rx="4.2" ry="4.6" fill="#ffe85e"/><path d="M7.4 1.6999999999999993C7.88 7.18 9.70 9.89 13.4 10.6C9.70 11.31 7.88 14.02 7.4 19.5C6.92 14.02 5.10 11.31 1.4000000000000004 10.6C5.10 9.89 6.92 7.18 7.4 1.6999999999999993z" fill="#f4b640"/><path d="M7.4 4.6C7.72 8.30 8.94 10.12 11.4 10.6C8.94 11.08 7.72 12.90 7.4 16.6C7.08 12.90 5.86 11.08 3.4000000000000004 10.6C5.86 10.12 7.08 8.30 7.4 4.6z" fill="#fcd94a"/><path d="M14.6 23.4C15.10 30.42 17.02 33.89 20.9 34.8C17.02 35.71 15.10 39.18 14.6 46.199999999999996C14.10 39.18 12.18 35.71 8.3 34.8C12.18 33.89 14.10 30.42 14.6 23.4z" fill="#f4b640"/><path d="M14.6 27.199999999999996C14.94 31.88 16.21 34.19 18.8 34.8C16.21 35.41 14.94 37.72 14.6 42.4C14.26 37.72 12.99 35.41 10.399999999999999 34.8C12.99 34.19 14.26 31.88 14.6 27.199999999999996z" fill="#fcd94a"/></svg></span><span style="font-size:49.44px;letter-spacing:-0.099px;font-weight:700"> Why Styledown?</span></div>
<div class="tl " style="left:1440px;top:562.38px;line-height:52px;font-size:32.96px;"><span style="font-size:32.96px;letter-spacing:0.441px;-webkit-text-stroke:.3px currentColor">Write in </span><span style="font-size:32.96px;letter-spacing:-0.162px;font-weight:700">plain Markdown</span><span style="font-size:32.96px;letter-spacing:-0.156px;-webkit-text-stroke:.3px currentColor"> </span><span class="arr">→</span><span style="font-size:32.96px;letter-spacing:0.598px;-webkit-text-stroke:.3px currentColor"> Style with </span><span style="font-size:32.96px;letter-spacing:-0.438px;font-weight:700">professional controls</span><span style="font-size:32.96px;letter-spacing:-0.156px;-webkit-text-stroke:.3px currentColor"> </span><span class="arr">→</span><span style="font-size:32.96px;letter-spacing:0.259px;-webkit-text-stroke:.3px currentColor"> Export as </span><span style="font-size:32.96px;letter-spacing:-0.007px;font-weight:700">beautiful</span></div>
<div class="tl " style="left:1440px;top:613.78px;line-height:52px;font-size:32.96px;"><span style="font-size:32.96px;letter-spacing:-1.023px;font-weight:700">PDFs</span></div>
<div class="tl " style="left:1440px;top:699.18px;line-height:50px;font-size:32.96px;"><span style="font-size:32.96px;letter-spacing:0.598px;-webkit-text-stroke:.3px currentColor">Perfect for reports, documentation, articles, resumes, and any document that needs</span></div>
<div class="tl " style="left:1440px;top:749.28px;line-height:50px;font-size:32.96px;"><span style="font-size:32.96px;letter-spacing:0.562px;-webkit-text-stroke:.3px currentColor">to look polished and professional.</span></div>
<svg id="mm" width="1300" height="130" viewBox="0 0 1300 130" style="left:1440px;top:836px">
<g fill="#ECECFF" stroke="#9370DB" stroke-width="1.9"><rect x="15.600" y="13.500" width="400.400" height="103"/><rect x="512.500" y="13.500" width="343.700" height="103"/><rect x="952.300" y="13.500" width="325.500" height="103"/></g>
<g stroke="#333" stroke-width="1.9" fill="none"><path d="M417 65H500"/><path d="M857.200 65H940"/></g>
<g fill="#333"><path d="M497.500 57.500 511.500 65 497.500 72.500z"/><path d="M937.300 57.500 951.300 65 937.300 72.500z"/></g></svg>
<div class="tl " style="left:1513.5px;top:879.05px;line-height:46px;font-size:31.312px;"><span class="em" style="width:38.5px"><svg style="left:0px;top:-27.20px" width="31.6" height="31.60" viewBox="0 0 36 36"><path d="M4 33 31.500 4.500" stroke="#1c1c1c" stroke-width="3.400" stroke-linecap="round"/><path d="M4.500 27c2-3.200 6-5.200 10-5.700l9-1.200c2.600-.3 3.800 2.600 1.600 3.800L21.500 25.500h10.700c2.100 0 2.700 2.300 1 3.300-4 2.300-9.200 3.700-15.200 3.700H7.500c-2.600 0-4.500-2.700-3-5.500z" fill="#fbc636"/><path d="M4.500 29c4-1.500 9-2 14-1.500l13.800-1.200c1.500.5 1.800 2.200.6 2.900-4 2.300-9.100 3.800-15.100 3.800H7.500c-2 0-3.500-2-3-4z" fill="#eda52a"/><path d="M4 33l3.600-6.800" stroke="#1c1c1c" stroke-width="3.400" stroke-linecap="round"/></svg></span><span style="font-size:31.31px;letter-spacing:0.666px;-webkit-text-stroke:.3px currentColor;color:#333"> Write Markdown</span></div>
<div class="tl " style="left:2010px;top:879.05px;line-height:46px;font-size:31.312px;"><span class="em" style="width:38.5px"><svg style="left:0px;top:-21.19px" width="30" height="24.19" viewBox="0 0 62 50"><path d="M0 16.1C.6 11 2.8 7.400 5.900 5 10 1.600 15 0 20.200.3c5.400.2 10.300 1.300 14.900 3.400 4.700 2.100 8.800 4.600 12.400 7.500 3.800 3.300 6.900 7 9.300 11.200 2.300 3.600 4 7.300 4.900 11.100.5 3 0 5.500-1.800 7.500-1.600 2-3.700 3.200-6.200 3.700-2.200.4-4.300 0-6.200-1.200-1.700-1.200-3.100-2.900-4.300-5-.9-1.500-2.200-2.500-3.800-2.800-1.300-.2-2.100.4-2.400 1.600-.2 1.500.2 3.100 1.200 4.900.6 1.900.2 3.500-1.200 5-1.200 1.300-2.700 2-4.400 2.200-3.400.3-6.700-.8-9.900-3.400-4.200-2.400-7.900-4.900-11.200-7.500C7.800 35.300 5.100 32 3.400 28.600 1.200 24.600 0 20.400 0 16.100z" fill="#a8762a" transform="translate(0 .9)"/><path d="M0 16.1C.6 11 2.8 7.400 5.900 5 10 1.600 15 0 20.200.3c5.400.2 10.300 1.300 14.900 3.400 4.700 2.100 8.800 4.600 12.400 7.500 3.800 3.300 6.900 7 9.300 11.200 2.300 3.600 4 7.300 4.900 11.100.5 3 0 5.500-1.800 7.500-1.600 2-3.700 3.200-6.200 3.700-2.200.4-4.300 0-6.200-1.200-1.700-1.200-3.100-2.900-4.300-5-.9-1.500-2.200-2.500-3.800-2.800-1.300-.2-2.100.4-2.400 1.600-.2 1.500.2 3.100 1.200 4.900.6 1.900.2 3.500-1.200 5-1.200 1.300-2.700 2-4.400 2.200-3.400.3-6.700-.8-9.900-3.400-4.200-2.400-7.900-4.900-11.200-7.500C7.800 35.300 5.100 32 3.400 28.600 1.200 24.600 0 20.400 0 16.100z" fill="#dba544"/><path d="M2 15C3 9 8 3.500 16 2.200c8-1.200 17 1.300 25 6 6 3.500 11 8.500 14.500 14.500C50 16 43 10.500 34 7.500 25 4.500 14 4 8 8c-3 2-5 4.500-6 7z" fill="#e9bd62" opacity=".7"/><ellipse cx="13.7" cy="14.9" rx="6.6" ry="5.2" fill="#1ea5ee" transform="rotate(25 13.7 14.9)"/><ellipse cx="13.2" cy="14.2" rx="4.2" ry="3" fill="#5fd0ff" transform="rotate(25 13.2 14.2)"/><ellipse cx="26.7" cy="7.8" rx="6.4" ry="5" fill="#2fb52f" transform="rotate(20 26.7 7.8)"/><ellipse cx="26.2" cy="7" rx="4" ry="2.8" fill="#62e05c" transform="rotate(20 26.2 7)"/><ellipse cx="44.4" cy="14.9" rx="5.4" ry="4.2" fill="#f2cf1c" transform="rotate(30 44.4 14.9)"/><ellipse cx="44" cy="14.3" rx="3.4" ry="2.4" fill="#ffe94f" transform="rotate(30 44 14.3)"/><ellipse cx="55.6" cy="31.7" rx="4.6" ry="5.2" fill="#ee5a45" transform="rotate(-20 55.6 31.7)"/><ellipse cx="55.2" cy="31" rx="2.8" ry="3.2" fill="#ff8b72" transform="rotate(-20 55.2 31)"/><ellipse cx="24.5" cy="33.5" rx="7.2" ry="5.2" fill="#8a2fd0" transform="rotate(28 24.5 33.5)"/><ellipse cx="24" cy="32.8" rx="4.6" ry="3" fill="#b05cf0" transform="rotate(28 24 32.8)"/><ellipse cx="41.9" cy="27.6" rx="4.7" ry="4.1" fill="#7a521a" transform="rotate(20 41.9 27.6)"/><ellipse cx="42.1" cy="28.5" rx="4.1" ry="3.5" fill="#ffffff" transform="rotate(20 42.1 28.5)"/></svg></span><span style="font-size:31.31px;letter-spacing:0.698px;-webkit-text-stroke:.3px currentColor;color:#333"> Apply Styles</span></div>
<div class="tl " style="left:2451px;top:879.05px;line-height:46px;font-size:31.312px;"><span class="em" style="width:38.5px"><svg style="left:1px;top:-28.88px" width="27.4" height="32.88" viewBox="0 0 30 36"><path d="M2 2.500h14.500L27.500 13v21H2z" fill="#e6e6e3"/><path d="M2 30h25.500v4H2z" fill="#d8d8d4"/><path d="M16.500 2.500c1 4 .8 7.300-.5 10 3.500-1.300 7.300-1.200 11.500.5z" fill="#8d8d8b"/><path d="M6 16h17M6 20h17M6 24h17M6 28h17" stroke="#d2d2ce" stroke-width="1.100"/></svg></span><span style="font-size:31.31px;letter-spacing:-0.045px;-webkit-text-stroke:.3px currentColor;color:#333"> Export PDF</span></div>
<div class="tl " style="left:1440px;top:1017.17px;line-height:60px;font-size:49.44px;"><span class="em" style="width:44.2px"><svg style="left:-0.3px;top:-39.20px" width="47" height="46.00" viewBox="0 0 47 46"><path d="M12.100 28l4.700 4.600C15.500 37 12 41 8.400 42.900 6 44.300 3.800 45.200 1.900 45.700c.3-3.200.9-6.300 1.800-9.400 1.600-3.600 4.400-6.400 8.400-8.300z" fill="#f59a1f"/><path d="M12.500 30.500l2.500 2.500c-1.300 3.200-3.500 6-6.300 8-1.400.9-2.700 1.500-3.900 1.900.3-2.300.9-4.500 1.800-6.600 1.400-2.600 3.400-4.500 5.900-5.800z" fill="#ffe23d"/><path d="M4.700 17.700 17.700 14.900 14.900 23.300.9 28c.2-4 1.500-7.400 3.800-10.300z" fill="#e6291b"/><path d="M22.400 26.100l7.400 4.600-1.800 9.400c-2.600 2.400-5.700 3.900-9.400 4.600l1.900-10.200z" fill="#e6291b"/><path d="M46.500.6c.9 6.500-.6 12.700-4.300 18.500-3.600 5.500-8.600 9.900-14.900 13.100-2.600 1.300-5.200 2.200-7.800 2.700-2.700-1.200-5-3.500-6.800-6.900.4-2.800 1.200-5.500 2.500-8.100C18.300 13.600 22.600 8.600 28 5 33.700 1.400 39.900-.1 46.500.6z" fill="#e9edf2"/><path d="M46.500.6c.9 6.500-.6 12.700-4.300 18.500-3.600 5.500-8.600 9.900-14.900 13.100-2.600 1.300-5.200 2.200-7.800 2.700-1-.4-1.900-1-2.800-1.800C24.500 30.500 31.300 26 36.500 19.600 41.400 13.700 44.700 7.400 46.500.6z" fill="#9fb3c8"/><path d="M13 26.500c1-2.300 2.200-4.500 3.600-6.500l11 10.800c-2.700 1.600-5.400 2.900-8.100 3.700-2.900-1.500-5-4.100-6.500-8z" fill="#5b9bd8" opacity=".85"/><path d="M46.500.6c-4.600-.5-9 .1-13.100 1.700 2.100 1.300 4.100 2.900 5.900 4.800 2 2 3.700 4.100 5 6.300C46.400 9.400 47.100 5.100 46.500.6z" fill="#b9d7f2"/><circle cx="30.700" cy="9.800" r="4.800" fill="#7a1f1f"/><circle cx="30.700" cy="9.800" r="3.100" fill="#1d1418"/></svg></span><span style="font-size:49.44px;letter-spacing:-0.015px;font-weight:700"> Powerful Markdown Support</span></div>
<div class="tl " style="left:1440px;top:1117.62px;line-height:56px;font-size:41.2px;"><span style="font-size:41.2px;letter-spacing:-0.393px;font-weight:700">GitHub Flavored Markdown</span></div>
<div class="tl " style="left:1440px;top:1188.98px;line-height:52px;font-size:32.96px;"><span style="font-size:32.96px;letter-spacing:0.536px;-webkit-text-stroke:.3px currentColor">Create rich content with tables, task lists, and more:</span></div>
<div id="tbl"><div class="th"></div><div class="hl" style="top:85px"></div><div class="hl" style="top:170.400px"></div><div class="hl" style="top:256px"></div><div class="vl"></div></div>
<div class="tl " style="left:1464px;top:1290.58px;line-height:52px;font-size:32.96px;"><span style="font-size:32.96px;letter-spacing:-0.263px;font-weight:700">Feature</span></div>
<div class="tl " style="left:2023.5px;top:1290.58px;line-height:52px;font-size:32.96px;"><span style="font-size:32.96px;letter-spacing:-0.059px;font-weight:700">Notes</span></div>
<div class="tl " style="left:1464px;top:1373.88px;line-height:52px;font-size:32.96px;"><span style="font-size:32.96px;letter-spacing:0.651px;-webkit-text-stroke:.3px currentColor">Tables</span></div>
<div class="tl " style="left:2023.5px;top:1373.88px;line-height:52px;font-size:32.96px;"><span style="font-size:32.96px;letter-spacing:0.502px;-webkit-text-stroke:.3px currentColor">Full formatting</span></div>
<div class="tl " style="left:1464px;top:1459.98px;line-height:52px;font-size:32.96px;"><span style="font-size:32.96px;letter-spacing:0.484px;-webkit-text-stroke:.3px currentColor">Task Lists</span></div>
<div class="tl " style="left:2023.5px;top:1459.98px;line-height:52px;font-size:32.96px;"><span style="font-size:32.96px;letter-spacing:0.593px;-webkit-text-stroke:.3px currentColor">Visual checkboxes</span></div>
<div class="tl " style="left:1464px;top:1545.78px;line-height:52px;font-size:32.96px;"><span style="font-size:32.96px;letter-spacing:0.643px;-webkit-text-stroke:.3px currentColor">Strikethrough</span></div>
<div class="tl " style="left:2023.5px;top:1545.78px;line-height:52px;font-size:32.96px;"><span style="font-size:32.96px;letter-spacing:0.387px;-webkit-text-stroke:.3px currentColor;text-decoration:line-through">Like this</span></div>
</div>
<div id="sd"></div><div id="rb"></div>
<svg class="ic" style="left:2810px;top:148px;color:#0a0a0a" width="40" height="40" viewBox="0 0 24 24" fill="none" stroke="currentColor" stroke-width="2" stroke-linecap="round" stroke-linejoin="round"><path d="M12 4v16"/><path d="M4 7V5a1 1 0 0 1 1-1h14a1 1 0 0 1 1 1v2"/><path d="M9 20h6"/></svg>
<svg class="ic" style="left:2810px;top:244px;color:#0a0a0a" width="40" height="40" viewBox="0 0 24 24" fill="none" stroke="currentColor" stroke-width="2" stroke-linecap="round" stroke-linejoin="round"><path d="M12 22a1 1 0 0 1 0-20 10 9 0 0 1 10 9 5 5 0 0 1-5 5h-2.25a1.75 1.75 0 0 0-1.4 2.8l.3.4a1.75 1.75 0 0 1-1.4 2.8z"/><circle cx="13.5" cy="6.5" r=".5" fill="currentColor"/><circle cx="17.5" cy="10.5" r=".5" fill="currentColor"/><circle cx="6.5" cy="12.5" r=".5" fill="currentColor"/><circle cx="8.5" cy="7.5" r=".5" fill="currentColor"/></svg>
<svg class="ic" style="left:2810px;top:340px;color:#0a0a0a" width="40" height="40" viewBox="0 0 24 24" fill="none" stroke="currentColor" stroke-width="2" stroke-linecap="round" stroke-linejoin="round"><path d="m18 16 4-4-4-4"/><path d="m6 8-4 4 4 4"/><path d="m14.5 4-5 16"/></svg>
<svg class="ic" style="left:2810px;top:436px;color:#0a0a0a" width="40" height="40" viewBox="0 0 24 24" fill="none" stroke="currentColor" stroke-width="2" stroke-linecap="round" stroke-linejoin="round"><path d="M12 3v18"/><rect width="18" height="18" x="3" y="3" rx="2"/><path d="M3 9h18"/><path d="M3 15h18"/></svg>
<svg class="ic" style="left:2810px;top:532px;color:#0a0a0a" width="40" height="40" viewBox="0 0 24 24" fill="none" stroke="currentColor" stroke-width="2" stroke-linecap="round" stroke-linejoin="round"><rect width="18" height="18" x="3" y="3" rx="2" ry="2"/><circle cx="9" cy="9" r="2"/><path d="m21 15-3.086-3.086a2 2 0 0 0-2.828 0L6 21"/></svg>
<svg class="ic" style="left:2810px;top:628px;color:#0a0a0a" width="40" height="40" viewBox="0 0 24 24" fill="none" stroke="currentColor" stroke-width="2" stroke-linecap="round" stroke-linejoin="round"><rect x="16" y="16" width="6" height="6" rx="1"/><rect x="2" y="16" width="6" height="6" rx="1"/><rect x="9" y="2" width="6" height="6" rx="1"/><path d="M5 16v-3a1 1 0 0 1 1-1h12a1 1 0 0 1 1 1v3"/><path d="M12 12V8"/></svg>
<svg class="ic" style="left:2810px;top:724px;color:#0a0a0a" width="40" height="40" viewBox="0 0 24 24" fill="none" stroke="currentColor" stroke-width="2" stroke-linecap="round" stroke-linejoin="round"><path d="M14 2v4a2 2 0 0 0 2 2h4"/><path d="m2.305 15.53.923-.382"/><path d="m3.228 12.852-.924-.383"/><path d="M4.677 21.5a2 2 0 0 0 1.313.5H18a2 2 0 0 0 2-2V7l-5-5H6a2 2 0 0 0-2 2v2.5"/><path d="m4.852 11.228-.383-.923"/><path d="m4.852 16.772-.383.924"/><path d="m7.148 11.228.383-.923"/><path d="m7.53 17.696-.382-.924"/><path d="m8.773 12.852.922-.383"/><path d="m8.773 15.148.922.383"/><circle cx="6" cy="14" r="3"/></svg>
<svg class="ic" style="left:2810px;top:820px;color:#0a0a0a" width="40" height="40" viewBox="0 0 24 24" fill="none" stroke="currentColor" stroke-width="2" stroke-linecap="round" stroke-linejoin="round"><path d="M11 17a4 4 0 0 1-8 0V5a2 2 0 0 1 2-2h4a2 2 0 0 1 2 2Z"/><path d="M16.7 13H19a2 2 0 0 1 2 2v4a2 2 0 0 1-2 2H7"/><path d="M 7 17h.01"/><path d="m11 8 2.3-2.3a2.4 2.4 0 0 1 3.404.004L18.6 7.6a2.4 2.4 0 0 1 .026 3.434L9.9 19.8"/></svg>
<svg class="ic" style="left:2810px;top:1448px;color:#8a8a8a" width="40" height="40" viewBox="0 0 24 24" fill="none" stroke="currentColor" stroke-width="2" stroke-linecap="round" stroke-linejoin="round"><path d="M3 7v6h6"/><path d="M21 17a9 9 0 0 0-9-9 9 9 0 0 0-6 2.3L3 13"/></svg>
<svg class="ic" style="left:2810px;top:1544px;color:#8a8a8a" width="40" height="40" viewBox="0 0 24 24" fill="none" stroke="currentColor" stroke-width="2" stroke-linecap="round" stroke-linejoin="round"><path d="M21 7v6h-6"/><path d="M3 17a9 9 0 0 1 9-9 9 9 0 0 1 6 2.3l3 2.7"/></svg></div></body></html>
